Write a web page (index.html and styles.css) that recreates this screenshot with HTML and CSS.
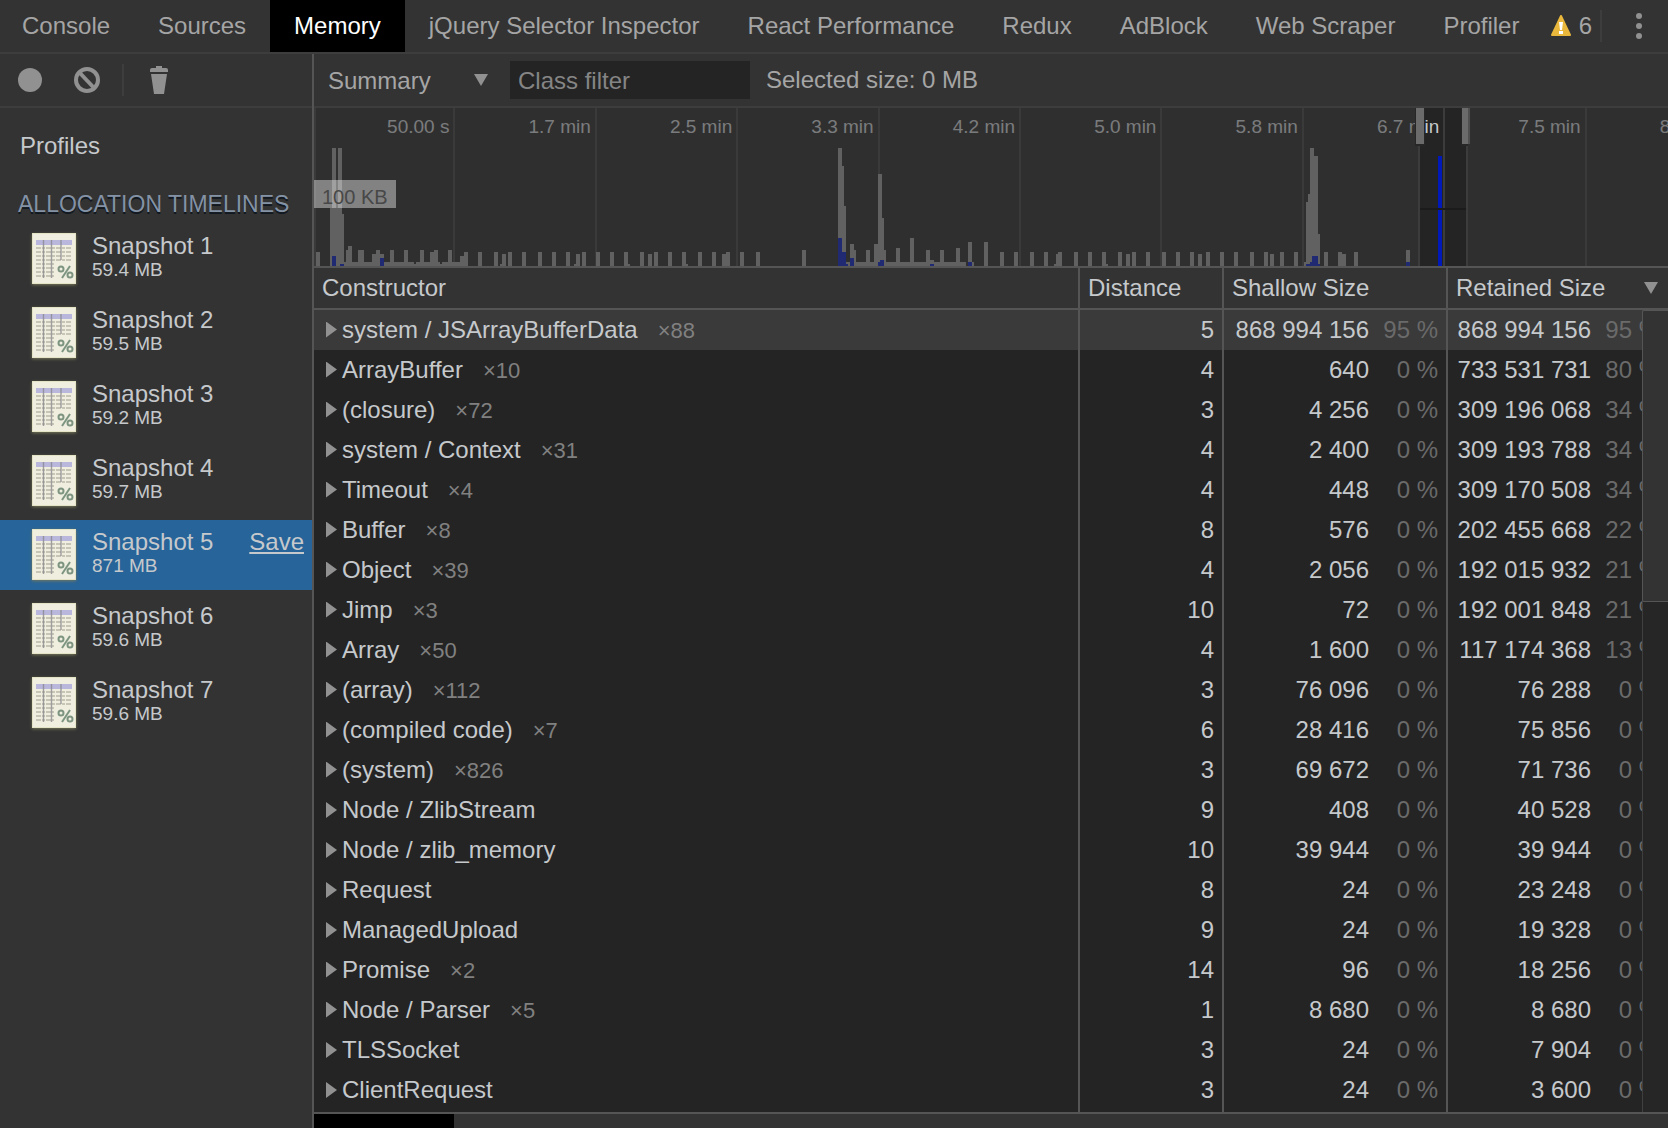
FILE: index.html
```html
<!DOCTYPE html>
<html lang="en">
<head>
  <meta charset="UTF-8" />
  <meta name="viewport" content="width=device-width, initial-scale=1.0"/>
  <title>Memory - DevTools</title>
  <link rel="stylesheet" href="styles.css">
</head>
<body>

  <svg class="defs" aria-hidden="true">
    <symbol id="sheet" viewBox="0 0 44 51">
      <rect width="44" height="51" fill="#e4e3c6"/>
      <rect x="1" y="1" width="42" height="49" fill="#efeedf"/>
      <rect x="4" y="7" width="36" height="5" fill="#b9b7dc"/>
      <path d="M4 15h36M4 19h36M4 23h36M4 27h36M4 31h18M4 35h18M4 39h18M4 43h18" stroke="#b9b8a9" stroke-width="1.500" stroke-dasharray="5 1 3 1"/>
      <path d="M11.500 7v38M19.500 7v38M29 7v20" stroke="#8d8a90" stroke-width="1.400" opacity=".8"/>
      <g fill="none" stroke="#7d9580" stroke-width="2">
        <circle cx="29" cy="36" r="2.500"/>
        <circle cx="38" cy="42" r="2.500"/>
        <path d="M38 33l-8 12"/>
      </g>
    </symbol>
  </svg>

  <nav class="tabs">
    <button class="tab">Console</button>
    <button class="tab">Sources</button>
    <button class="tab active">Memory</button>
    <button class="tab">jQuery Selector Inspector</button>
    <button class="tab">React Performance</button>
    <button class="tab">Redux</button>
    <button class="tab">AdBlock</button>
    <button class="tab">Web Scraper</button>
    <button class="tab">Profiler</button>
    <div class="tabs-right">
      <button class="warnings" aria-label="6 warnings">
        <svg width="20" height="22" viewBox="0 0 20 22">
          <path d="M10 1L19 20H1z" fill="#e8b73c" stroke="#e8b73c" stroke-width="2" stroke-linejoin="round"/>
          <path d="M8 7h4l-1 8H9z" fill="#fff"/>
          <rect x="8" y="16" width="4" height="3" fill="#fff"/>
        </svg>
        6
      </button>
      <button class="more" aria-label="More options">
        <svg width="8" height="28" viewBox="0 0 8 28">
          <circle cx="4" cy="4" r="3"/>
          <circle cx="4" cy="14" r="3"/>
          <circle cx="4" cy="24" r="3"/>
        </svg>
      </button>
    </div>
  </nav>

  <div class="panel">
    <aside class="sidebar">
      <div class="toolbar actions">
        <button aria-label="Record">
          <svg width="28" height="28" viewBox="0 0 28 28"><circle cx="14" cy="14" r="12"/></svg>
        </button>
        <button aria-label="Clear all profiles">
          <svg width="28" height="28" viewBox="0 0 28 28">
            <path d="M6 6l16 17" fill="none" stroke="#919191" stroke-width="4"/>
            <circle cx="14" cy="14" r="11" fill="none" stroke="#919191" stroke-width="4"/>
          </svg>
        </button>
        <span class="divider"></span>
        <button aria-label="Delete">
          <svg width="20" height="28" viewBox="0 0 20 28">
            <path d="M1 6V4q0-2 2-2h4V0h6v2h4q2 0 2 2v2zM2 8h16l-3 20H5z"/>
          </svg>
        </button>
      </div>

      <h1 class="title">Profiles</h1>
      <h2 class="group">ALLOCATION TIMELINES</h2>
      <ul class="snapshots">
        <li class="snapshot"><svg class="sheet"><use href="#sheet"/></svg><div class="info"><b>Snapshot 1</b><small>59.4 MB</small></div></li>
        <li class="snapshot"><svg class="sheet"><use href="#sheet"/></svg><div class="info"><b>Snapshot 2</b><small>59.5 MB</small></div></li>
        <li class="snapshot"><svg class="sheet"><use href="#sheet"/></svg><div class="info"><b>Snapshot 3</b><small>59.2 MB</small></div></li>
        <li class="snapshot"><svg class="sheet"><use href="#sheet"/></svg><div class="info"><b>Snapshot 4</b><small>59.7 MB</small></div></li>
        <li class="snapshot selected"><svg class="sheet"><use href="#sheet"/></svg><div class="info"><b>Snapshot 5</b><small>871 MB</small></div><a href="#save" class="save">Save</a></li>
        <li class="snapshot"><svg class="sheet"><use href="#sheet"/></svg><div class="info"><b>Snapshot 6</b><small>59.6 MB</small></div></li>
        <li class="snapshot"><svg class="sheet"><use href="#sheet"/></svg><div class="info"><b>Snapshot 7</b><small>59.6 MB</small></div></li>
      </ul>
    </aside>

    <main class="content">
      <div class="toolbar filters">
        <label class="view">
          <select aria-label="Perspective"><option>Summary</option></select>
          <svg width="14" height="12" viewBox="0 0 14 12"><path d="M0 0h14L7 12z"/></svg>
        </label>
        <input type="text" class="filter" placeholder="Class filter" aria-label="Class filter">
        <span>Selected size: 0 MB</span>
      </div>

      <div class="overview">
        <div class="scale">
          <span>50.00 s</span>
          <span>1.7 min</span>
          <span>2.5 min</span>
          <span>3.3 min</span>
          <span>4.2 min</span>
          <span>5.0 min</span>
          <span>5.8 min</span>
          <span>6.7 min</span>
          <span>7.5 min</span>
          <span>8.3 min</span>
        </div>
        <svg class="bars">
          <!-- allocated, then freed -->
          <path class="freed" d="M2 158v-14h4v14zM16 158v-58h2v-60h4v60h2v-60h4v66h2v52zM32 158v-16h2v-4h4v20zM44 158v-16h6v16zM58 158v-12h4v-4h4v4h4v12z
            M76 158v-16h4v16zM90 158v-16h4v16zM106 158v-16h4v16zM116 158v-14h4v-2h4v16zM134 158v-16h4v16zM146 158v-10h4v-4h4v14z
            M30 158v-4h70v2h2v-2h24v2h2v-2h18v4z
            M164 158v-14h4v14zM180 158v-14h4v14zM186 158v-2h2v-10h4v12zM194 158v-14h4v14zM208 158v-14h4v14zM224 158v-14h4v14zM238 158v-14h4v14zM252 158v-14h4v14z
            M260 158v-2h2v-10h4v12zM268 158v-14h4v14zM282 158v-14h4v14zM296 158v-14h4v14zM310 158v-14h4v12h2v2zM326 158v-14h4v14zM334 158v-12h4v12zM340 158v-14h4v14z
            M354 158v-14h4v14zM368 158v-14h4v12h2v2zM384 158v-14h4v14zM398 158v-14h4v14zM408 158v-12h4v-2h4v14zM426 158v-14h4v14zM442 158v-14h4v14zM488 158v-16h4v16z
            M524 158v-118h4v18h2v40h2v60zM532 158v-4h120v4zM536 158v-22h4v6h2v16zM552 158v-16h4v16zM560 158v-22h4v-70h4v44h2v32h2v16zM582 158v-18h4v18zM596 158v-28h4v28z
            M612 158v-16h4v10h4v6zM626 158v-16h4v16zM642 158v-18h4v18zM654 158v-24h4v20h2v4zM670 158v-24h4v24zM686 158v-14h4v14zM700 158v-14h4v14zM716 158v-14h4v14z
            M730 158v-14h4v14zM740 158v-2h2v-10h2v-2h4v14zM760 158v-14h4v14zM774 158v-14h4v14zM788 158v-14h4v12h2v2zM804 158v-14h4v14zM812 158v-12h4v12zM818 158v-14h4v14z
            M832 158v-14h4v14zM848 158v-14h4v14zM862 158v-14h4v14zM876 158v-14h4v14zM884 158v-12h4v12zM892 158v-14h4v14zM906 158v-14h4v14zM920 158v-14h4v14z
            M936 158v-14h4v14zM950 158v-14h4v14zM956 158v-12h4v12zM966 158v-14h4v14zM980 158v-14h4v14zM990 158v-4h2v-60h2v-8h2v-46h4v8h4v78h2v32z
            M1010 158v-14h4v14zM1024 158v-14h4v2h4v12zM1040 158v-14h4v14zM1092 158v-16h4v16z"/>
          <!-- still live -->
          <path class="live" d="M18 158v-10h4v10zM26 158v-2h4v2zM66 158v-8h4v8zM524 158v-28h4v14h4v12h2v2zM536 158v-8h4v8zM564 158v-4h2v-2h4v6zM616 158v-2h4v2zM654 158v-4h4v4z
            M992 158v-2h4v-2h2v-6h6v8h2v2zM1092 158v-4h4v4zM1124 158v-110h4v110z"/>
        </svg>
        <div class="range">
          <div class="shade"></div>
          <div class="window">
            <i class="grip"></i>
            <i class="grip"></i>
          </div>
          <div class="shade"></div>
        </div>
        <span class="size-label">100 KB</span>
      </div>

      <div class="grid">
        <table>
          <colgroup>
            <col>
            <col class="col-distance">
            <col class="col-shallow">
            <col class="col-retained">
          </colgroup>
          <thead>
            <tr>
              <th>Constructor</th>
              <th>Distance</th>
              <th>Shallow Size</th>
              <th><div class="sorted">Retained Size <svg width="14" height="12" viewBox="0 0 14 12"><path d="M0 0h14L7 12z"/></svg></div></th>
            </tr>
          </thead>
          <tbody id="rows"></tbody>
        </table>
        <div class="scrollbar"><div class="thumb"></div></div>
      </div>

      <div class="drawer"><div class="drawer-tab"></div></div>
    </main>
  </div>

  <script>
    // name, count, distance, shallow size, shallow %, retained size, retained %
    const rows = [
      ["system / JSArrayBufferData", 88, 5, "868 994 156", 95, "868 994 156", 95],
      ["ArrayBuffer", 10, 4, "640", 0, "733 531 731", 80],
      ["(closure)", 72, 3, "4 256", 0, "309 196 068", 34],
      ["system / Context", 31, 4, "2 400", 0, "309 193 788", 34],
      ["Timeout", 4, 4, "448", 0, "309 170 508", 34],
      ["Buffer", 8, 8, "576", 0, "202 455 668", 22],
      ["Object", 39, 4, "2 056", 0, "192 015 932", 21],
      ["Jimp", 3, 10, "72", 0, "192 001 848", 21],
      ["Array", 50, 4, "1 600", 0, "117 174 368", 13],
      ["(array)", 112, 3, "76 096", 0, "76 288", 0],
      ["(compiled code)", 7, 6, "28 416", 0, "75 856", 0],
      ["(system)", 826, 3, "69 672", 0, "71 736", 0],
      ["Node / ZlibStream", 1, 9, "408", 0, "40 528", 0],
      ["Node / zlib_memory", 1, 10, "39 944", 0, "39 944", 0],
      ["Request", 1, 8, "24", 0, "23 248", 0],
      ["ManagedUpload", 1, 9, "24", 0, "19 328", 0],
      ["Promise", 2, 14, "96", 0, "18 256", 0],
      ["Node / Parser", 5, 1, "8 680", 0, "8 680", 0],
      ["TLSSocket", 1, 3, "24", 0, "7 904", 0],
      ["ClientRequest", 1, 3, "24", 0, "3 600", 0]
    ];
    const tbody = document.getElementById("rows");

    rows.forEach(([name, count, distance, shallow, shallowPct, retained, retainedPct], index) => {
      const tr = document.createElement("tr");
      if (index === 0) tr.className = "current";
      tr.innerHTML = `
        <td><button class="expand" aria-label="Expand ${name}"></button>${name}${count > 1 ? `<span class="count">×${count}</span>` : ""}</td>
        <td class="num">${distance}</td>
        <td class="num">${shallow}<span class="pct">${shallowPct} %</span></td>
        <td class="num">${retained}<span class="pct">${retainedPct} %</span></td>
      `;
      tbody.appendChild(tr);
    });

    // filler row keeps the column lines going to the bottom edge
    tbody.insertAdjacentHTML("beforeend", '<tr class="filler"><td></td><td></td><td></td><td></td></tr>');
  </script>

</body>
</html>
```
FILE: styles.css
```css
:root {
  --bg: #333333;
  --bg-dark: #242424;
  --line: #3d3d3d;
  --line-strong: #555555;
  --text: #c6c9cc;
  --text-dim: #a5a5a5;
  --icon: #919191;
}

* {
  box-sizing: border-box;
}

body {
  margin: 0;
  height: 100vh;
  display: flex;
  flex-direction: column;
  overflow: hidden;
  background-color: var(--bg);
  color: var(--text);
  font-family: "Liberation Sans", Arial, sans-serif;
  font-size: 24px;
}

button, input, select {
  font: inherit;
  color: inherit;
  background: none;
  border: none;
  padding: 0;
  margin: 0;
}

svg {
  display: block;
  fill: var(--icon);
}

.defs {
  position: absolute;
  width: 0;
  height: 0;
}

/* tabs */
.tabs {
  display: flex;
  flex: none;
  height: 54px;
  border-bottom: 2px solid var(--line);
  color: var(--text-dim);
  white-space: nowrap;
}

.tab {
  padding: 0 24px;
}

.tab:first-child {
  padding-left: 22px;
}

.tab.active {
  background-color: #000;
  color: #fff;
}

.tabs-right {
  display: flex;
  align-items: center;
  margin-left: auto;
}

.warnings {
  display: flex;
  align-items: center;
  gap: 8px;
  height: 32px;
  padding-right: 8px;
  border-right: 2px solid var(--line);
}

.more {
  padding: 0 25px 0 33px;
}

/* layout */
.panel {
  display: flex;
  flex: 1;
  min-height: 0;
}

.sidebar {
  flex: none;
  width: 314px;
  border-right: 2px solid var(--line-strong);
}

.content {
  display: flex;
  flex: 1;
  flex-direction: column;
  min-width: 0;
}

.toolbar {
  display: flex;
  align-items: center;
  flex: none;
  height: 54px;
  border-bottom: 2px solid var(--line);
  color: var(--text-dim);
}

.actions {
  gap: 29px;
  padding-left: 16px;
}

.divider {
  width: 2px;
  height: 32px;
  margin: 0 -4px 0 -8px;
  background-color: var(--line);
}

.filters {
  padding-left: 14px;
}

.view {
  display: grid;
  align-items: center;
  width: 160px;
}

.view select,
.view svg {
  grid-area: 1 / 1;
}

.view select {
  appearance: none;
  width: 100%;
}

.view svg {
  justify-self: end;
  pointer-events: none;
}

.filter {
  width: 240px;
  height: 38px;
  margin: 0 16px 0 22px;
  padding: 2px 8px 0;
  background-color: var(--bg-dark);
}

.filter::placeholder {
  color: #858585;
}

/* sidebar */
.title,
.group {
  margin: 0;
  font-size: 24px;
  font-weight: normal;
  line-height: 28px;
}

.title {
  padding: 24px 20px 0;
}

.group {
  padding: 30px 18px 6px;
  color: #8492a5;
  font-size: 23px;
  text-shadow: 0 2px 0 #111820;
  white-space: nowrap;
}

.snapshots {
  display: grid;
  gap: 4px;
  margin: 0;
  padding: 0;
  list-style: none;
}

.snapshot {
  display: flex;
  height: 70px;
  padding: 9px 8px 0 32px;
}

.snapshot.selected {
  background-color: #276499;
}

.sheet {
  width: 44px;
  height: 51px;
  margin-right: 16px;
  box-shadow: 0 1px 3px #77775a;
}

.info b,
.info small {
  display: block;
  font-weight: normal;
  line-height: 24px;
}

.info b,
.save {
  line-height: 26px;
}

.info small {
  font-size: 19px;
  line-height: 22px;
}

.save {
  margin-left: auto;
  color: inherit;
}

/* timeline */
.overview {
  position: relative;
  flex: none;
  height: 160px;
  overflow: hidden;
  background-color: var(--bg-dark);
  border-bottom: 2px solid var(--line-strong);
}

.scale {
  display: flex;
  width: 1414px;
  height: 100%;
  box-shadow: inset 2px 0 #3c3c3c;
}

.scale span {
  flex: 1;
  padding: 8px 4px 0 0;
  border-right: 2px solid #3c3c3c;
  font-size: 19px;
  line-height: 22px;
  text-align: right;
}

.bars {
  position: absolute;
  top: 0;
  left: 0;
  width: 100%;
  height: 100%;
}

.freed {
  fill: #909090;
}

.live {
  fill: #0019b8;
}

.range {
  position: absolute;
  inset: 0;
  display: grid;
  grid-template-columns: 1104fr 50px 200fr;
}

.shade {
  background-color: rgba(58, 58, 58, .54);
}

.window {
  display: flex;
  justify-content: space-between;
  margin: 0 -2px;
  background: linear-gradient(#1b1b1b, #1b1b1b) 4px 100px / 46px 2px no-repeat,
    linear-gradient(#3c3c3c, #3c3c3c) 2px 0 / 2px 100% no-repeat,
    linear-gradient(#3c3c3c, #3c3c3c) 50px 0 / 2px 100% no-repeat;
}

.grip {
  width: 8px;
  height: 36px;
  background-color: #6b6b6b;
  box-shadow: 0 1px 0 1px #272727;
}

.size-label {
  position: absolute;
  top: 72px;
  left: 0;
  height: 28px;
  padding: 6px 8px 0 8px;
  background-color: rgba(255, 255, 255, .4);
  color: #484848;
  font-size: 20px;
  line-height: 22px;
}

/* heap table */
.grid {
  position: relative;
  flex: none;
  border-bottom: 2px solid var(--line-strong);
  overflow: hidden;
}

table {
  width: 100%;
  table-layout: fixed;
  border-spacing: 0;
  background-color: var(--bg-dark);
}

.col-distance {
  width: 144px;
}

.col-shallow {
  width: 224px;
}

.col-retained {
  width: 220px;
}

th, td {
  height: 40px;
  padding: 0 8px;
  border-right: 2px solid var(--line-strong);
  line-height: 28px;
  white-space: nowrap;
}

th:last-child,
td:last-child {
  border-right: none;
}

th {
  height: 42px;
  background-color: var(--bg);
  border-bottom: 2px solid var(--line-strong);
  font-weight: normal;
  text-align: left;
}

td:first-child {
  padding-left: 12px;
}

.sorted {
  display: flex;
  align-items: center;
  justify-content: space-between;
  padding-right: 2px;
}

.num {
  text-align: right;
}

.current {
  background-color: #3a3a3a;
}

.expand {
  width: 11px;
  height: 16px;
  margin-right: 5px;
  background-color: var(--icon);
  clip-path: polygon(0 0, 100% 50%, 0 100%);
}

.count {
  margin-left: 20px;
  color: #808080;
  font-size: 22px;
}

.pct {
  display: inline-block;
  width: 69px;
  color: #6a6a6a;
}

.filler td {
  height: 2px;
  padding: 0;
}

.scrollbar {
  position: absolute;
  top: 42px;
  right: 0;
  bottom: 0;
  width: 26px;
  background-color: #262626;
  border-left: 1px solid #3f3f3f;
}

.thumb {
  height: 292px;
  margin-left: -1px;
  background-color: var(--bg);
  border: 1px solid var(--line-strong);
  border-right: none;
  border-radius: 2px 0 0 2px;
}

.drawer {
  display: flex;
  flex: 1;
}

.drawer-tab {
  width: 140px;
  background-color: #000;
}
```
